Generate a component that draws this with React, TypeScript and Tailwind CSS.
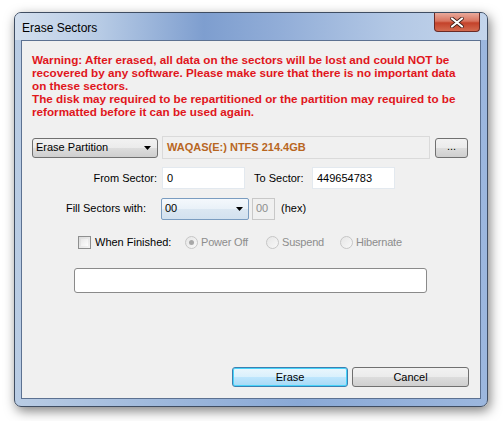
import React from "react";

const font = { fontFamily: '"Liberation Sans", Arial, sans-serif' };

function DownArrow() {
  return (
    <svg width="7" height="4" viewBox="0 0 7 4" className="shrink-0">
      <path d="M0 0 H7 L3.5 4 Z" fill="#000" />
    </svg>
  );
}

function Radio({ label, checked }: { label: string; checked?: boolean }) {
  return (
    <div className="flex items-center gap-[3px]">
      <div className="w-[13px] h-[13px] rounded-full border border-[#c6c6c6] bg-gradient-to-br from-[#e6e6e6] to-[#f8f8f8] flex items-center justify-center">
        {checked && <div className="w-[5px] h-[5px] rounded-full bg-[#a8a8a8]" />}
      </div>
      <span className="text-[#8d8d8d] tracking-[-0.2px]">{label}</span>
    </div>
  );
}

export default function App() {
  return (
    <div className="w-[503px] h-[421px] bg-white overflow-hidden text-[11px] text-black" style={font}>
      <div className="ml-[14px] mt-[12px] w-[474px] h-[395px] rounded-[7px] border border-[#3f4d62] shadow-[2px_4px_12px_rgba(0,0,0,0.5)] flex flex-col overflow-hidden bg-[linear-gradient(90deg,#b9cce4_0%,#9fb9dc_30%,#8aa9d6_60%,#9cb7de_100%)]">
        <div className="h-[27px] flex items-start justify-between pl-[7px] pr-[7px] bg-[linear-gradient(90deg,#d3dfee_0%,#b7cbe5_18%,#7e9ecf_40%,#90acd7_55%,#b3c8e5_80%,#c4d5eb_100%)]">
          <span className="mt-[6px] text-[12px] text-black">Erase Sectors</span>
          <div className="w-[46px] h-[19px] rounded-b-[4px] border border-t-0 border-[#6a2a25] bg-[linear-gradient(180deg,#e9a99b_0%,#d8745f_45%,#c4422a_55%,#d36a4f_100%)] flex items-center justify-center">
            <svg width="14" height="11" viewBox="0 0 14 11">
              <path d="M2 1.5 L12 9.5 M12 1.5 L2 9.5" stroke="#3a1a14" strokeWidth="3.6" strokeLinecap="round" />
              <path d="M2 1.5 L12 9.5 M12 1.5 L2 9.5" stroke="#ffffff" strokeWidth="2.2" strokeLinecap="round" />
            </svg>
          </div>
        </div>
        <div className="flex-1 mx-[6px] mb-[7px] border border-[#5c7191] bg-[#f0f0f0] flex flex-col">
          <div className="pl-[10px] pt-[12px] pr-[2px] font-bold text-[#e0161c] text-[11.7px] leading-[13px] whitespace-nowrap">
            <div>Warning: After erased, all data on the sectors will be lost and could NOT be</div>
            <div>recovered by any software. Please make sure that there is no important data</div>
            <div>on these sectors.</div>
            <div>The disk may required to be repartitioned or the partition may required to be</div>
            <div>reformatted before it can be used again.</div>
          </div>

          <div className="mt-[18px] pl-[10px] flex items-center">
            <div className="w-[126px] h-[20px] rounded-[3px] border border-[#707070] bg-[linear-gradient(180deg,#f2f2f2_0%,#ebebeb_50%,#dddddd_50%,#cfcfcf_100%)] flex items-center justify-between pl-[3px] pr-[6px]">
              <span>Erase Partition</span>
              <DownArrow />
            </div>
            <div className="ml-[4px] w-[268px] h-[23px] border border-[#dadada] bg-[#f0f0f0] flex items-center pl-[4px] font-bold text-[#b8661f]">
              WAQAS(E:) NTFS 214.4GB
            </div>
            <div className="ml-[5px] w-[33px] h-[20px] rounded-[3px] border border-[#707070] bg-[linear-gradient(180deg,#f2f2f2_0%,#ebebeb_50%,#dddddd_50%,#cfcfcf_100%)] flex items-center justify-center leading-none pb-[2px]">
              ...
            </div>
          </div>

          <div className="mt-[8px] pl-[10px] flex items-center h-[22px]">
            <span className="w-[125px] text-right">From Sector:</span>
            <div className="ml-[5px] w-[83px] h-[22px] border border-[#e3e9ef] bg-white flex items-center pl-[4px]">0</div>
            <span className="ml-[9px] w-[58px]">To Sector:</span>
            <div className="w-[83px] h-[22px] border border-[#e3e9ef] bg-white flex items-center pl-[4px]">449654783</div>
          </div>

          <div className="mt-[8px] pl-[10px] flex items-center h-[23px]">
            <span className="w-[114px] text-right">Fill Sectors with:</span>
            <div className="ml-[15px] w-[88px] h-[22px] rounded-[2px] border border-[#7a9cc0] bg-[linear-gradient(180deg,#f4f8fc_0%,#e9f1f8_50%,#dbe7f2_50%,#d2e1ef_100%)] flex items-center justify-between pl-[3px] pr-[5px]">
              <span>00</span>
              <DownArrow />
            </div>
            <div className="ml-[3px] w-[23px] h-[22px] border border-[#c8c8c8] bg-[#f0f0f0] flex items-center pl-[3px] text-[#8d8d8d]">00</div>
            <span className="ml-[6px]">(hex)</span>
          </div>

          <div className="mt-[16px] pl-[56px] flex items-center h-[13px]">
            <div className="w-[13px] h-[13px] border border-[#8e8f8f] bg-[linear-gradient(135deg,#dcdcdc_0%,#f4f4f4_100%)] p-[2px]">
              <div className="w-full h-full bg-[linear-gradient(135deg,#e9e9e9,#fdfdfd)]" />
            </div>
            <span className="ml-[4px] w-[90px]">When Finished:</span>
            <div className="w-[81px]">
              <Radio label="Power Off" checked />
            </div>
            <div className="w-[74px]">
              <Radio label="Suspend" />
            </div>
            <div>
              <Radio label="Hibernate" />
            </div>
          </div>

          <div className="mt-[19px] ml-[52px] w-[353px] h-[25px] rounded-[3px] border border-[#8a8a8a] bg-white" />

          <div className="flex-1" />

          <div className="mb-[11px] pr-[11px] flex justify-end gap-[4px]">
            <div className="w-[116px] h-[20px] rounded-[3px] border border-[#3c7fb1] shadow-[inset_0_0_0_1px_#48d4fa] bg-[linear-gradient(180deg,#eaf6fd_0%,#d9f0fc_50%,#bee6fd_50%,#a7d9f5_100%)] flex items-center justify-center">
              Erase
            </div>
            <div className="w-[117px] h-[20px] rounded-[3px] border border-[#707070] bg-[linear-gradient(180deg,#f2f2f2_0%,#ebebeb_50%,#dddddd_50%,#cfcfcf_100%)] flex items-center justify-center">
              Cancel
            </div>
          </div>
        </div>
      </div>
    </div>
  );
}
